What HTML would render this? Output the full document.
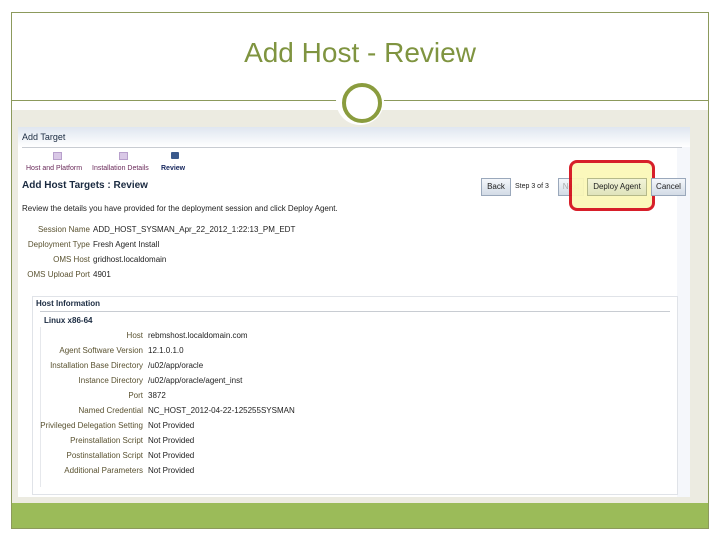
<!DOCTYPE html>
<html><head><style>
body{margin:0;width:720px;height:540px;background:#fff;position:relative;overflow:hidden;font-family:"Liberation Sans",sans-serif}
.a{position:absolute}
.s{font-size:8px;color:#222;white-space:nowrap}
.l{color:#5a5230;text-align:right;width:200px}
.btn{position:absolute;top:178px;height:16px;border:1px solid #9aa8bb;background:linear-gradient(#f4f7fb,#d3dbe6);font-size:8px;line-height:16px;text-align:center;color:#222}
</style></head><body>
<div class="a" style="left:11px;top:12px;width:696px;height:515px;border:1px solid #8c9a5c"></div>
<div class="a" style="left:0;top:37px;width:720px;text-align:center;font-size:28px;color:#7f9440;font-family:'Liberation Sans',sans-serif">Add Host - Review</div>
<div class="a" style="left:11px;top:100px;width:698px;height:1px;background:#8c9a5c"></div>
<div class="a" style="left:12px;top:110px;width:696px;height:393px;background:#ecebe1"></div>
<div class="a" style="left:336px;top:77px;width:48px;height:48px;border-radius:50%;background:#fff"></div>
<div class="a" style="left:342px;top:83px;width:32px;height:32px;border-radius:50%;border:4px solid #8a9c3e;box-sizing:content-box"></div>
<div class="a" style="left:18px;top:127px;width:672px;height:370px;background:#fff"></div>
<div class="a" style="left:18px;top:127px;width:672px;height:20px;background:linear-gradient(#dfe6f0,#fff)"></div>
<div class="a" style="left:677px;top:147px;width:13px;height:350px;background:#f5f7fb"></div>
<div class="a s" style="left:22px;top:132px;font-size:9px;color:#1a2a40">Add Target</div>
<div class="a" style="left:22px;top:147px;width:660px;height:1px;background:#c8ccd2"></div>
<div class="a" style="left:53px;top:152px;width:7px;height:6px;background:#d9c8e6;border:1px solid #b8a0cc"></div>
<div class="a" style="left:119px;top:152px;width:7px;height:6px;background:#d9c8e6;border:1px solid #b8a0cc"></div>
<div class="a" style="left:171px;top:152px;width:8px;height:7px;background:#3a5a8c;border-radius:1px"></div>
<div class="a s" style="left:26px;top:165px;font-size:7px;color:#6a2a5a">Host and Platform</div>
<div class="a s" style="left:92px;top:165px;font-size:7px;color:#6a2a5a">Installation Details</div>
<div class="a s" style="left:161px;top:165px;font-size:7px;color:#1a2a60;font-weight:bold">Review</div>
<div class="a s" style="left:22px;top:180px;font-size:10px;font-weight:bold;color:#1a2a40">Add Host Targets : Review</div>
<div class="btn" style="left:481px;width:28px">Back</div>
<div class="a s" style="left:515px;top:183px;font-size:7px">Step 3 of 3</div>
<div class="btn" style="left:558px;width:24px;color:#aaa">Next</div>
<div class="a" style="left:569px;top:160px;width:86px;height:51px;border:3px solid #d40f1a;border-radius:8px;background:#fbf8b8;box-sizing:border-box;opacity:.93"></div>
<div class="btn" style="left:587px;width:58px;background:linear-gradient(#f2f4d8,#dfe4bc);border-color:#b5b98a">Deploy Agent</div>
<div class="btn" style="left:651px;width:33px">Cancel</div>
<div class="a s" style="left:22px;top:204px">Review the details you have provided for the deployment session and click Deploy Agent.</div>
<div class="a s l" style="left:-110px;top:225px">Session Name</div><div class="a s" style="left:93px;top:225px">ADD_HOST_SYSMAN_Apr_22_2012_1:22:13_PM_EDT</div>
<div class="a s l" style="left:-110px;top:240px">Deployment Type</div><div class="a s" style="left:93px;top:240px">Fresh Agent Install</div>
<div class="a s l" style="left:-110px;top:255px">OMS Host</div><div class="a s" style="left:93px;top:255px">gridhost.localdomain</div>
<div class="a s l" style="left:-110px;top:270px">OMS Upload Port</div><div class="a s" style="left:93px;top:270px">4901</div>
<div class="a" style="left:32px;top:296px;width:644px;height:197px;border:1px solid #e0e3e8;background:#fff"></div>
<div class="a s" style="left:36px;top:299px;font-weight:bold;color:#1a2a40">Host Information</div>
<div class="a" style="left:40px;top:311px;width:630px;height:1px;background:#c8ccd2"></div>
<div class="a s" style="left:44px;top:316px;font-weight:bold;color:#1a2a40">Linux x86-64</div>
<div class="a" style="left:40px;top:327px;width:630px;height:160px;border-left:1px solid #e6e8ec"></div>
<div class="a s l" style="left:-57px;top:331px">Host</div><div class="a s" style="left:148px;top:331px">rebmshost.localdomain.com</div>
<div class="a s l" style="left:-57px;top:346px">Agent Software Version</div><div class="a s" style="left:148px;top:346px">12.1.0.1.0</div>
<div class="a s l" style="left:-57px;top:361px">Installation Base Directory</div><div class="a s" style="left:148px;top:361px">/u02/app/oracle</div>
<div class="a s l" style="left:-57px;top:376px">Instance Directory</div><div class="a s" style="left:148px;top:376px">/u02/app/oracle/agent_inst</div>
<div class="a s l" style="left:-57px;top:391px">Port</div><div class="a s" style="left:148px;top:391px">3872</div>
<div class="a s l" style="left:-57px;top:406px">Named Credential</div><div class="a s" style="left:148px;top:406px">NC_HOST_2012-04-22-125255SYSMAN</div>
<div class="a s l" style="left:-57px;top:421px">Privileged Delegation Setting</div><div class="a s" style="left:148px;top:421px">Not Provided</div>
<div class="a s l" style="left:-57px;top:436px">Preinstallation Script</div><div class="a s" style="left:148px;top:436px">Not Provided</div>
<div class="a s l" style="left:-57px;top:451px">Postinstallation Script</div><div class="a s" style="left:148px;top:451px">Not Provided</div>
<div class="a s l" style="left:-57px;top:466px">Additional Parameters</div><div class="a s" style="left:148px;top:466px">Not Provided</div>
<div class="a" style="left:12px;top:503px;width:696px;height:25px;background:#9bbb59"></div>
</body></html>
